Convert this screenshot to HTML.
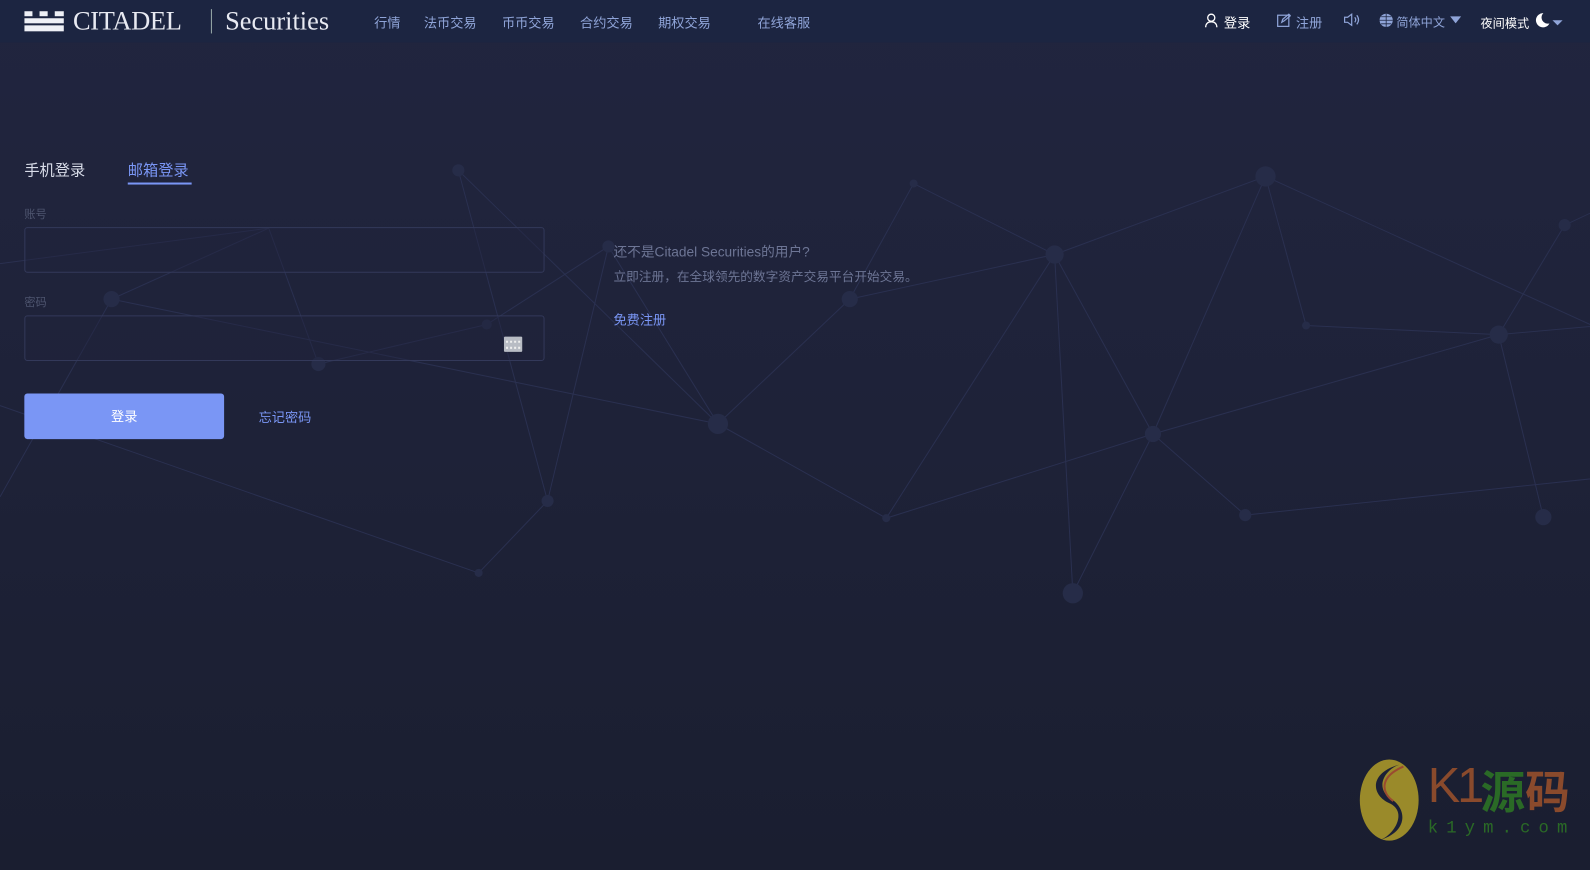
<!DOCTYPE html>
<html><head><meta charset="utf-8"><style>
*{margin:0;padding:0;box-sizing:border-box}
body{width:1590px;height:870px;overflow:hidden;background:linear-gradient(180deg,#21253f 0%,#1e2238 50%,#1a1e30 100%);font-family:"Liberation Sans","Noto Sans CJK SC",sans-serif;position:relative}
#w{position:absolute;left:0;top:0;width:1568px;height:858px;transform:scale(1.01403);transform-origin:0 0}
.hdr{position:absolute;left:0;top:0;width:1568px;height:42px;background:#1c2541}
.nav{position:absolute;top:12px;font-size:13px;color:#8fa4d8}
.t{position:absolute;font-size:13px}
svg.bg{position:absolute;left:0;top:0}
.inp{position:absolute;left:24px;width:513px;height:45px;border:1px solid #33395a;border-radius:3px;background:rgba(32,36,60,.4)}
</style></head><body><div id="w">
<svg class="bg" width="1568" height="858">
<g stroke="#2a3050" stroke-width="1" fill="none">
<path d="M452 168L540 494L472 565L0 400M452 168L708 418L600 243M901 181L1040 251L1248 174L1288 321L1478 330L1543 222L1590 200M1040 251L1137 428L1058 585L1040 251L874 511L708 418L838 295L901 181M1137 428L1478 330L1522 510M1248 174L1137 428L1228 508L1590 470M1478 330L1590 320M1248 174L1590 330M110 295L708 418M0 260L265 225L314 359L480 320L600 243M265 225L110 295L0 490M540 494L600 243M838 295L1040 251M1137 428L874 511"/>
</g>
<g fill="#262c48">
<circle cx="452" cy="168" r="6"/><circle cx="901" cy="181" r="4"/><circle cx="1248" cy="174" r="10"/><circle cx="1040" cy="251" r="9"/><circle cx="838" cy="295" r="8"/><circle cx="708" cy="418" r="10"/><circle cx="874" cy="511" r="4"/><circle cx="1137" cy="428" r="8"/><circle cx="1058" cy="585" r="10"/><circle cx="1288" cy="321" r="4"/><circle cx="1478" cy="330" r="9"/><circle cx="1543" cy="222" r="6"/><circle cx="1522" cy="510" r="8"/><circle cx="1228" cy="508" r="6"/><circle cx="540" cy="494" r="6"/><circle cx="472" cy="565" r="4"/><circle cx="110" cy="295" r="8"/><circle cx="314" cy="359" r="7"/><circle cx="480" cy="320" r="5"/><circle cx="600" cy="243" r="6"/>
</g>
</svg>
<div class="hdr"></div>
<svg style="position:absolute;left:24px;top:11px" width="39" height="20"><g fill="#eef0f6"><rect x="0" y="0" width="8" height="5"/><rect x="15" y="0" width="8" height="5"/><rect x="30" y="0" width="9" height="5"/><rect x="0" y="7" width="39" height="5"/><rect x="0" y="14" width="39" height="6"/></g></svg>
<div style="position:absolute;left:72px;top:6px;font-family:'Liberation Serif',serif;font-size:26px;color:#e8eaf2;letter-spacing:-0.3px">CITADEL</div>
<div style="position:absolute;left:208px;top:9px;width:1px;height:24px;background:#9aa"></div>
<div style="position:absolute;left:222px;top:6px;font-family:'Liberation Serif',serif;font-size:26px;color:#e8eaf2">Securities</div>
<div class="nav" style="left:369px">行情</div>
<div class="nav" style="left:418px">法币交易</div>
<div class="nav" style="left:495px">币币交易</div>
<div class="nav" style="left:572px">合约交易</div>
<div class="nav" style="left:649px">期权交易</div>
<div class="nav" style="left:747px">在线客服</div>
<svg style="position:absolute;left:1188px;top:13px" width="13" height="14" fill="none" stroke="#fff" stroke-width="1.3"><circle cx="6.5" cy="4.5" r="3.5"/><path d="M1 14c0-4 2.5-5.5 5.5-5.5S12 10 12 14"/></svg>
<div class="nav" style="left:1207px;color:#fff">登录</div>
<svg style="position:absolute;left:1259px;top:13px" width="14" height="14" fill="none" stroke="#8fa4d8" stroke-width="1.2"><rect x="1" y="2" width="11" height="11"/><path d="M5 9l1-3 6-5 1.5 1.5-6 5z"/></svg>
<div class="nav" style="left:1278px">注册</div>
<svg style="position:absolute;left:1325px;top:13px" width="16" height="13" fill="none" stroke="#8fa4d8" stroke-width="1.2"><path d="M1 4h3l4-3v11l-4-3H1z"/><path d="M11 4q2 2.5 0 5M13 2q3.5 4.5 0 9"/></svg>
<svg style="position:absolute;left:1360px;top:13px" width="14" height="14"><circle cx="7" cy="7" r="6.5" fill="#8fa4d8"/><path d="M0.5 7h13M7 .5v13M2 3.5h10M2 10.5h10" stroke="#1c2541" stroke-width=".8" fill="none"/></svg>
<div class="nav" style="left:1377px;font-size:12px;top:13px">简体中文</div>
<svg style="position:absolute;left:1430px;top:16px" width="11" height="7"><path d="M0 0h11L5.5 7z" fill="#8fa4d8"/></svg>
<div class="nav" style="left:1460px;color:#fff;font-size:12px;top:14px">夜间模式</div>
<svg style="position:absolute;left:1513px;top:12px" width="28" height="16"><path d="M9 1a7 7 0 1 0 6 10a6 6 0 0 1-6-10z" fill="#fff"/><path d="M18 8h10l-5 5z" fill="#8fa4d8"/></svg>

<div class="t" style="left:24px;top:157px;font-size:15px;color:#d8dce8">手机登录</div>
<div class="t" style="left:126px;top:157px;font-size:15px;color:#7a96f5">邮箱登录</div>
<div style="position:absolute;left:126px;top:180px;width:63px;height:2px;background:#7a96f5"></div>
<div class="t" style="left:24px;top:203px;font-size:11px;color:#4e556f">账号</div>
<div class="inp" style="top:224px"></div>
<div class="t" style="left:24px;top:290px;font-size:11px;color:#4e556f">密码</div>
<div class="inp" style="top:311px"></div>
<div style="position:absolute;left:497px;top:332px;width:18px;height:15px;background:#b8bcc4;border-radius:1px"><div style="margin:4px 2px;height:1px;border-top:2px dotted #eee"></div><div style="margin:0 2px;height:1px;border-top:2px dotted #eee"></div></div>
<div style="position:absolute;left:24px;top:388px;width:197px;height:45px;background:#7a96f5;border-radius:3px;color:#fff;font-size:13px;text-align:center;line-height:45px">登录</div>
<div class="t" style="left:255px;top:401px;color:#7a96f5">忘记密码</div>

<div class="t" style="left:605px;top:237px;color:#6d7595;font-size:13.5px">还不是Citadel Securities的用户?</div>
<div class="t" style="left:605px;top:262px;color:#6d7595;font-size:12.5px">立即注册，在全球领先的数字资产交易平台开始交易。</div>
<div class="t" style="left:605px;top:305px;color:#7a96f5;font-size:13px">免费注册</div>

<svg style="position:absolute;left:1340px;top:748px" width="62" height="82"><ellipse cx="30" cy="41" rx="29" ry="40" fill="#9a8a2a"/><path d="M40 6C10 14 12 36 30 44S36 74 22 80C48 72 48 50 32 40S24 12 40 6z" fill="#1c2036"/><path d="M44 8C20 18 22 34 34 42" stroke="#9a4a30" stroke-width="2" fill="none"/></svg>
<div style="position:absolute;left:1408px;top:748px;font-size:48px;color:#8a4a2c;font-family:'Liberation Sans',sans-serif;line-height:56px;letter-spacing:-3px">K1</div>
<div style="position:absolute;left:1460px;top:752px;font-size:44px;color:#2a6a26;line-height:52px;font-family:'Noto Sans CJK SC',sans-serif;font-weight:bold">源</div>
<div style="position:absolute;left:1504px;top:752px;font-size:44px;color:#8a4a2c;line-height:52px;font-family:'Noto Sans CJK SC',sans-serif;font-weight:bold">码</div>
<div style="position:absolute;left:1408px;top:808px;font-size:17px;color:#2a6a26;letter-spacing:8px;font-family:'Liberation Mono',monospace">k1ym.com</div>
</div></body></html>
